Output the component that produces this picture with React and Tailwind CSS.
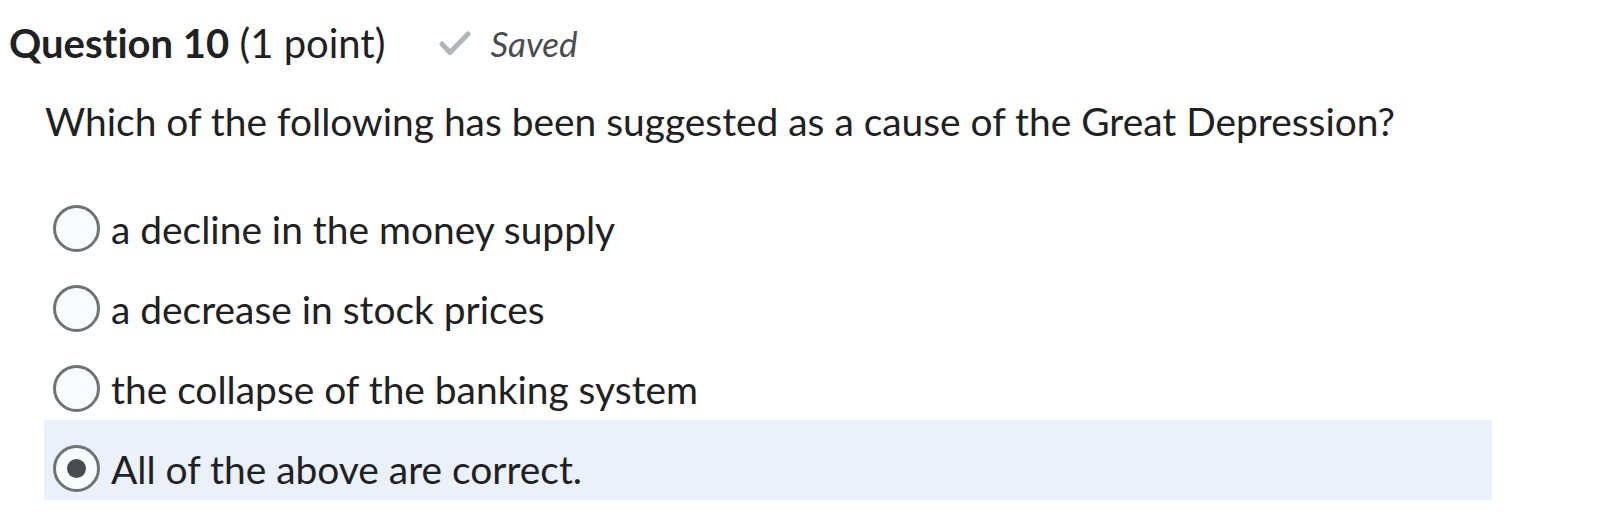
import React from "react";

const options = [
  { text: "a decline in the money supply", selected: false },
  { text: "a decrease in stock prices", selected: false },
  { text: "the collapse of the banking system", selected: false },
  { text: "All of the above are correct.", selected: true },
];

function Radio({ selected }) {
  return (
    <div className="w-[47px] h-[47px] shrink-0 rounded-full border-[3px] border-[#6e7376] bg-[#f9fbff] flex items-center justify-center">
      {selected && <div className="w-[19px] h-[19px] rounded-full bg-[#494c4e]" />}
    </div>
  );
}

export default function App() {
  return (
    <div
      className="w-[1624px] h-[530px] bg-white text-[#202122] [font-variant-ligatures:none]"
      style={{ fontFamily: "Lato, 'Open Sans', sans-serif" }}
    >
      <div className="pt-[18px] pl-[9px]">
        <div className="h-[50px] flex items-center">
          <h2 className="text-[40px] leading-[46px] whitespace-nowrap">
            <span className="font-bold">Question 10</span>
            <span className="font-normal"> (1 point)</span>
          </h2>
          <div className="ml-[54px] flex items-center gap-[19px] text-[#494c4e]">
            <svg width="32" height="25" viewBox="0 0 32 25" fill="none">
              <path
                d="M3 13 L11 21.5 L29 3"
                stroke="#b2b6b9"
                strokeWidth="5"
                strokeLinecap="round"
                strokeLinejoin="round"
              />
            </svg>
            <span className="italic text-[35px] leading-[40px]">Saved</span>
          </div>
        </div>
      </div>
      <p className="mt-[30px] ml-[45px] text-[38.9px] leading-[46px] whitespace-nowrap">
        Which of the following has been suggested as a cause of the Great Depression?
      </p>
      <div className="mt-[36px] ml-[44px] w-[1448px] flex flex-col">
        {options.map((o) => (
          <div
            key={o.text}
            className={`h-[80px] flex items-end pb-[8px] pl-[9px] ${o.selected ? "bg-[#eaf1fb]" : ""}`}
          >
            <div className="h-[47px] flex items-center gap-[11px]">
              <Radio selected={o.selected} />
              <span className="text-[38.9px] leading-[46px] whitespace-nowrap">{o.text}</span>
            </div>
          </div>
        ))}
      </div>
    </div>
  );
}
